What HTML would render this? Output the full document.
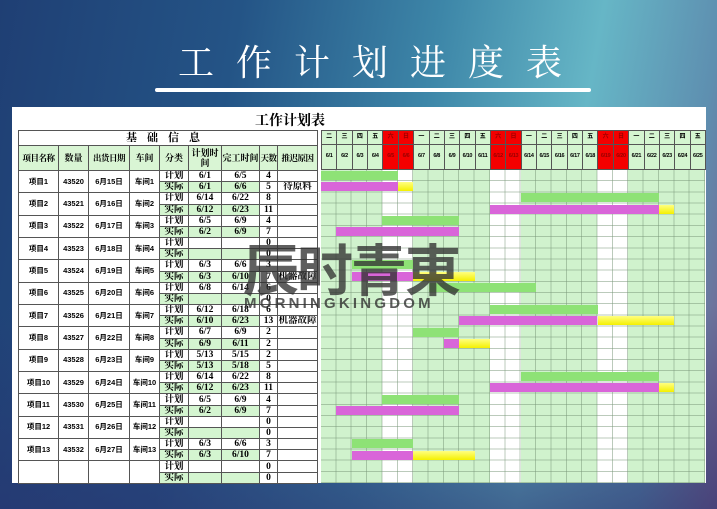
<!DOCTYPE html>
<html><head><meta charset="utf-8"><style>
*{margin:0;padding:0;box-sizing:border-box}
body{width:717px;height:509px;overflow:hidden;position:relative;font-family:"Liberation Serif","Noto Serif CJK SC",serif;
background:linear-gradient(100deg,#1f3f74 0%,#245486 30%,#3d86a8 55%,#66b6c6 75%,#5e8fb0 90%,#7a5a8a 100%);}
.bg2{position:absolute;left:0;top:0;width:717px;height:509px;background:linear-gradient(180deg,rgba(0,0,0,0) 0%,rgba(0,0,0,0) 60%,rgba(40,50,110,.6) 100%)}
.title{position:absolute;left:150px;top:36px;width:440px;text-align:center;color:#fff;font-size:36px;letter-spacing:22px;text-indent:22px;font-family:"Noto Serif CJK SC",serif;line-height:50px}
.uline{position:absolute;left:155px;top:88px;width:436px;height:4px;background:#fff;border-radius:2px}
.panel{position:absolute;left:12px;top:107px;width:694px;height:376px;background:#fff}
.t2{position:absolute;left:240px;top:112px;width:100px;text-align:center;font-size:14px;font-weight:bold;font-family:"Noto Serif CJK SC",serif;line-height:16px}
table{position:absolute;left:18px;top:130px;border-collapse:collapse;table-layout:fixed;font-size:9.5px;font-weight:bold}
td{border:1px solid #555;text-align:center;padding:0;overflow:hidden;white-space:nowrap;line-height:10px}
tr.d td{height:11.18px}
.s{font-family:"Liberation Sans","Noto Sans CJK SC",sans-serif;font-size:7.5px}
.g{background:#d4f5d0}
.hd td{background:#d9f5d4;font-size:9px;white-space:normal;line-height:10px}
.hd td.n{white-space:nowrap;font-size:8.5px;letter-spacing:-.5px}
.gantt{position:absolute;left:321px;top:130px;width:384px}
.row{display:flex;height:15px}
.row div{width:15.36px;flex:none;border:1px solid #555;border-left:none;background:#d4f5d0;font-size:6px;text-align:center;line-height:13px;font-weight:bold;font-family:"Liberation Sans","Noto Sans CJK SC",sans-serif}
.row div.r{background:#f40000;color:#900}
.row.dt{height:25px}
.row.dt div{line-height:23px;font-size:5.5px;letter-spacing:-.3px;border-top:none}
.data{position:relative;height:313px;background:#d0f2cd}
.grid{position:absolute;left:0;top:0;width:384px;height:313px;
background-image:repeating-linear-gradient(90deg,transparent 0 14.36px,rgba(120,150,120,.5) 14.36px 15.36px),repeating-linear-gradient(180deg,transparent 0 10.18px,rgba(120,150,120,.5) 10.18px 11.18px)}
.w{position:absolute;top:0;height:313px;width:30.72px;background:#fff}
.b{position:absolute;height:9px}
.G{background:#8ee276}.M{background:#d965d9}.Y{background:linear-gradient(180deg,#ffff80,#f4f000)}
.wm1{position:absolute;left:243px;top:236px;font-size:56px;font-family:"Noto Sans CJK SC",sans-serif;font-weight:bold;color:rgba(50,50,50,.78);letter-spacing:-2px;line-height:64px}
.wm2{position:absolute;left:244px;top:296px;font-size:15px;font-family:"Liberation Sans",sans-serif;font-weight:bold;color:rgba(50,50,50,.8);letter-spacing:3.2px;line-height:16px}
</style></head><body>
<div class="bg2"></div>
<div class="title">工作计划进度表</div>
<div class="uline"></div>
<div class="panel"></div>
<div class="t2">工作计划表</div>
<table>
<colgroup><col style="width:40px"><col style="width:30px"><col style="width:41px"><col style="width:30px"><col style="width:29px"><col style="width:33px"><col style="width:38px"><col style="width:18px"><col style="width:40px"></colgroup>
<tr><td colspan="9" style="height:15px;font-size:11px;letter-spacing:10px">基础信息</td></tr>
<tr class="hd"><td style="height:25px" class="n">项目名称</td><td>数量</td><td class="n">出货日期</td><td>车间</td><td>分类</td><td>计划时间</td><td>完工时间</td><td class="n">天数</td><td class="n">推迟原因</td></tr>
<tr class="d"><td rowspan="2" class="s">项目1</td><td rowspan="2" class="s">43520</td><td rowspan="2" class="s">6月15日</td><td rowspan="2" class="s">车间1</td><td>计划</td><td>6/1</td><td>6/5</td><td>4</td><td></td></tr>
<tr class="d"><td class="g">实际</td><td class="g">6/1</td><td class="g">6/6</td><td>5</td><td>待原料</td></tr>
<tr class="d"><td rowspan="2" class="s">项目2</td><td rowspan="2" class="s">43521</td><td rowspan="2" class="s">6月16日</td><td rowspan="2" class="s">车间2</td><td>计划</td><td>6/14</td><td>6/22</td><td>8</td><td></td></tr>
<tr class="d"><td class="g">实际</td><td class="g">6/12</td><td class="g">6/23</td><td>11</td><td></td></tr>
<tr class="d"><td rowspan="2" class="s">项目3</td><td rowspan="2" class="s">43522</td><td rowspan="2" class="s">6月17日</td><td rowspan="2" class="s">车间3</td><td>计划</td><td>6/5</td><td>6/9</td><td>4</td><td></td></tr>
<tr class="d"><td class="g">实际</td><td class="g">6/2</td><td class="g">6/9</td><td>7</td><td></td></tr>
<tr class="d"><td rowspan="2" class="s">项目4</td><td rowspan="2" class="s">43523</td><td rowspan="2" class="s">6月18日</td><td rowspan="2" class="s">车间4</td><td>计划</td><td></td><td></td><td>0</td><td></td></tr>
<tr class="d"><td class="g">实际</td><td class="g"></td><td class="g"></td><td>0</td><td></td></tr>
<tr class="d"><td rowspan="2" class="s">项目5</td><td rowspan="2" class="s">43524</td><td rowspan="2" class="s">6月19日</td><td rowspan="2" class="s">车间5</td><td>计划</td><td>6/3</td><td>6/6</td><td>3</td><td></td></tr>
<tr class="d"><td class="g">实际</td><td class="g">6/3</td><td class="g">6/10</td><td>7</td><td>机器故障</td></tr>
<tr class="d"><td rowspan="2" class="s">项目6</td><td rowspan="2" class="s">43525</td><td rowspan="2" class="s">6月20日</td><td rowspan="2" class="s">车间6</td><td>计划</td><td>6/8</td><td>6/14</td><td>6</td><td></td></tr>
<tr class="d"><td class="g">实际</td><td class="g"></td><td class="g"></td><td>0</td><td></td></tr>
<tr class="d"><td rowspan="2" class="s">项目7</td><td rowspan="2" class="s">43526</td><td rowspan="2" class="s">6月21日</td><td rowspan="2" class="s">车间7</td><td>计划</td><td>6/12</td><td>6/18</td><td>6</td><td></td></tr>
<tr class="d"><td class="g">实际</td><td class="g">6/10</td><td class="g">6/23</td><td>13</td><td>机器故障</td></tr>
<tr class="d"><td rowspan="2" class="s">项目8</td><td rowspan="2" class="s">43527</td><td rowspan="2" class="s">6月22日</td><td rowspan="2" class="s">车间8</td><td>计划</td><td>6/7</td><td>6/9</td><td>2</td><td></td></tr>
<tr class="d"><td class="g">实际</td><td class="g">6/9</td><td class="g">6/11</td><td>2</td><td></td></tr>
<tr class="d"><td rowspan="2" class="s">项目9</td><td rowspan="2" class="s">43528</td><td rowspan="2" class="s">6月23日</td><td rowspan="2" class="s">车间9</td><td>计划</td><td>5/13</td><td>5/15</td><td>2</td><td></td></tr>
<tr class="d"><td class="g">实际</td><td class="g">5/13</td><td class="g">5/18</td><td>5</td><td></td></tr>
<tr class="d"><td rowspan="2" class="s">项目10</td><td rowspan="2" class="s">43529</td><td rowspan="2" class="s">6月24日</td><td rowspan="2" class="s">车间10</td><td>计划</td><td>6/14</td><td>6/22</td><td>8</td><td></td></tr>
<tr class="d"><td class="g">实际</td><td class="g">6/12</td><td class="g">6/23</td><td>11</td><td></td></tr>
<tr class="d"><td rowspan="2" class="s">项目11</td><td rowspan="2" class="s">43530</td><td rowspan="2" class="s">6月25日</td><td rowspan="2" class="s">车间11</td><td>计划</td><td>6/5</td><td>6/9</td><td>4</td><td></td></tr>
<tr class="d"><td class="g">实际</td><td class="g">6/2</td><td class="g">6/9</td><td>7</td><td></td></tr>
<tr class="d"><td rowspan="2" class="s">项目12</td><td rowspan="2" class="s">43531</td><td rowspan="2" class="s">6月26日</td><td rowspan="2" class="s">车间12</td><td>计划</td><td></td><td></td><td>0</td><td></td></tr>
<tr class="d"><td class="g">实际</td><td class="g"></td><td class="g"></td><td>0</td><td></td></tr>
<tr class="d"><td rowspan="2" class="s">项目13</td><td rowspan="2" class="s">43532</td><td rowspan="2" class="s">6月27日</td><td rowspan="2" class="s">车间13</td><td>计划</td><td>6/3</td><td>6/6</td><td>3</td><td></td></tr>
<tr class="d"><td class="g">实际</td><td class="g">6/3</td><td class="g">6/10</td><td>7</td><td></td></tr>
<tr class="d"><td rowspan="2"></td><td rowspan="2"></td><td rowspan="2"></td><td rowspan="2"></td><td>计划</td><td></td><td></td><td>0</td><td></td></tr>
<tr class="d"><td class="g">实际</td><td class="g"></td><td class="g"></td><td>0</td><td></td></tr>
</table>

<div class="gantt">
<div class="row" style="border-left:1px solid #555"><div>二</div><div>三</div><div>四</div><div>五</div><div class="r">六</div><div class="r">日</div><div>一</div><div>二</div><div>三</div><div>四</div><div>五</div><div class="r">六</div><div class="r">日</div><div>一</div><div>二</div><div>三</div><div>四</div><div>五</div><div class="r">六</div><div class="r">日</div><div>一</div><div>二</div><div>三</div><div>四</div><div>五</div></div>
<div class="row dt" style="border-left:1px solid #555"><div>6/1</div><div>6/2</div><div>6/3</div><div>6/4</div><div class="r">6/5</div><div class="r">6/6</div><div>6/7</div><div>6/8</div><div>6/9</div><div>6/10</div><div>6/11</div><div class="r">6/12</div><div class="r">6/13</div><div>6/14</div><div>6/15</div><div>6/16</div><div>6/17</div><div>6/18</div><div class="r">6/19</div><div class="r">6/20</div><div>6/21</div><div>6/22</div><div>6/23</div><div>6/24</div><div>6/25</div></div>
<div class="data">
<div class="w" style="left:61.44px"></div><div class="w" style="left:168.96px"></div><div class="w" style="left:276.48px"></div>
<div class="grid"></div>
<div class="b G" style="top:1px;left:0;width:76.8px"></div>
<div class="b M" style="top:12.2px;left:0;width:76.8px"></div><div class="b Y" style="top:12.2px;left:76.8px;width:15.36px"></div>
<div class="b G" style="top:23.4px;left:199.7px;width:138.2px"></div>
<div class="b M" style="top:34.5px;left:169px;width:169px"></div><div class="b Y" style="top:34.5px;left:337.9px;width:15.36px"></div>
<div class="b G" style="top:45.7px;left:61.4px;width:76.8px"></div>
<div class="b M" style="top:56.9px;left:15.4px;width:122.9px"></div>
<div class="b G" style="top:90.4px;left:30.7px;width:61.4px"></div>
<div class="b M" style="top:101.6px;left:30.7px;width:61.4px"></div><div class="b Y" style="top:101.6px;left:92.2px;width:61.4px"></div>
<div class="b G" style="top:112.8px;left:107.5px;width:107.5px"></div>
<div class="b G" style="top:135.2px;left:169px;width:107.5px"></div>
<div class="b M" style="top:146.3px;left:138.2px;width:138.2px"></div><div class="b Y" style="top:146.3px;left:276.5px;width:76.8px"></div>
<div class="b G" style="top:157.5px;left:92.2px;width:46.1px"></div>
<div class="b M" style="top:168.7px;left:122.9px;width:15.36px"></div><div class="b Y" style="top:168.7px;left:138.2px;width:30.7px"></div>
<div class="b G" style="top:202.2px;left:199.7px;width:138.2px"></div>
<div class="b M" style="top:213.4px;left:169px;width:169px"></div><div class="b Y" style="top:213.4px;left:337.9px;width:15.36px"></div>
<div class="b G" style="top:224.6px;left:61.4px;width:76.8px"></div>
<div class="b M" style="top:235.8px;left:15.4px;width:122.9px"></div>
<div class="b G" style="top:269.3px;left:30.7px;width:61.4px"></div>
<div class="b M" style="top:280.5px;left:30.7px;width:61.4px"></div><div class="b Y" style="top:280.5px;left:92.2px;width:61.4px"></div>
</div>
</div>
<div class="wm1">辰时青東</div>
<div class="wm2">MORNINGKINGDOM</div>
</body></html>
